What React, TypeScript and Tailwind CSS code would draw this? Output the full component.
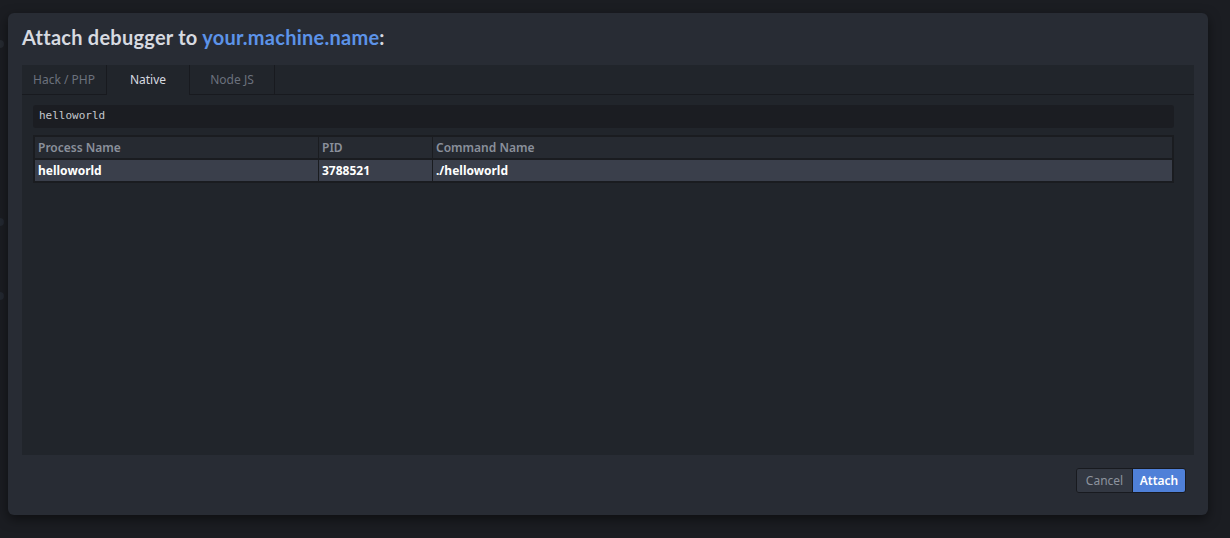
import React from "react";

const tabs = ["Hack / PHP", "Native", "Node JS"];

const rows = [{ name: "helloworld", pid: "3788521", command: "./helloworld" }];

export default function App() {
  return (
    <div
      className="relative w-[1230px] h-[538px] overflow-hidden bg-[#1b1d22] pt-[13px] pl-[8px]"
      style={{ fontFamily: '"Noto Sans", "Open Sans", sans-serif' }}
    >
      {/* faint background bits behind the modal */}
      <div className="absolute left-[-4px] top-[40px] w-[8px] h-[8px] rounded-full bg-[#262a31]" />
      <div className="absolute left-[-4px] top-[218px] w-[8px] h-[8px] rounded-full bg-[#232830]" />
      <div className="absolute left-[-4px] top-[292px] w-[8px] h-[8px] rounded-full bg-[#232830]" />

      {/* Modal */}
      <div className="relative w-[1200px] h-[502px] rounded-[6px] bg-[#282c34] shadow-[0_4px_12px_rgba(0,0,0,0.5)] px-[14px] flex flex-col">
        {/* Title */}
        <div className="h-[52px] pt-[10px] text-[20px] leading-[28px] font-bold text-[#d7dae0] font-['Lato',sans-serif] tracking-[0.25px]">
          Attach debugger to <span className="text-[#5c93e8]">your.machine.name</span>:
        </div>

        {/* Tab panel */}
        <div className="h-[390px] bg-[#21252b] flex flex-col">
          <div className="flex h-[30px] border-b border-[#181a1f]">
            {tabs.map((t) => {
              const active = t === "Native";
              return (
                <div
                  key={t}
                  className={
                    active
                      ? "w-[84px] h-[30px] flex items-center justify-center text-[12px] text-[#d7dae0] bg-[#21252b] border-x border-[#181a1f] -mb-px"
                      : "w-[84px] flex items-center justify-center text-[12px] text-[#6b717d]"
                  }
                >
                  {t}
                </div>
              );
            })}
            <div className="border-l border-[#181a1f]" />
          </div>

          <div className="pl-[11px] pr-[20px] pt-[10px]">
            <div className="h-[23px] rounded-[3px] bg-[#1b1d22] flex items-center px-[6px] text-[11px] text-[#c5c8ce] font-['DejaVu_Sans_Mono',monospace]">
              helloworld
            </div>

            {/* Table */}
            <div className="mt-[7px] border-2 border-[#1a1c20] bg-[#1a1c20] flex flex-col gap-[2px] w-[1141px]">
              <div className="flex h-[21px] bg-[#262a31] text-[12px] font-semibold text-[#8a909b]">
                <div className="w-[284px] px-[3px] flex items-center border-r border-[#1a1c20]">Process Name</div>
                <div className="w-[114px] px-[3px] flex items-center border-r border-[#1a1c20]">PID</div>
                <div className="flex-1 px-[3px] flex items-center">Command Name</div>
              </div>
              {rows.map((r) => (
                <div key={r.pid} className="flex h-[21px] bg-[#3a3f4b] text-[12px] font-bold text-white">
                  <div className="w-[284px] px-[3px] flex items-center border-r border-[#1a1c20]">{r.name}</div>
                  <div className="w-[114px] px-[3px] flex items-center border-r border-[#1a1c20]">{r.pid}</div>
                  <div className="flex-1 px-[3px] flex items-center">{r.command}</div>
                </div>
              ))}
            </div>
          </div>
        </div>

        {/* Buttons */}
        <div className="flex justify-end pr-[8px] pt-[13px]">
          <div className="flex h-[25px] rounded-[3px] border border-[#181a1f] overflow-hidden text-[12px]">
            <button className="w-[55px] bg-[#333842] text-[#8d939e]">Cancel</button>
            <button className="w-[53px] bg-[#4f80d8] text-white font-semibold border-l border-[#181a1f]">Attach</button>
          </div>
        </div>
      </div>
    </div>
  );
}
